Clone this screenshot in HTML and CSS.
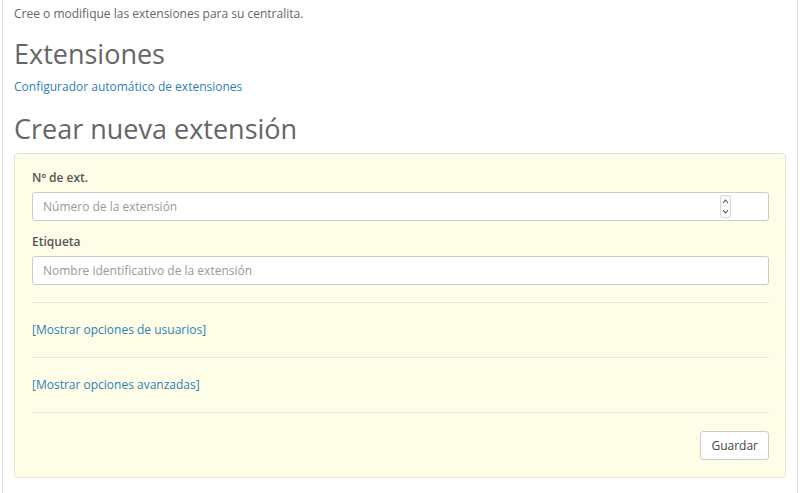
FILE: index.html
```html
<!DOCTYPE html>
<html lang="es">
<head>
<meta charset="utf-8">
<title>Extensiones</title>
<link rel="stylesheet" href="styles.css">
</head>
<body>
<div class="page">
  <p class="intro">Cree o modifique las extensiones para su centralita.</p>
  <h1 class="title">Extensiones</h1>
  <a class="link" href="#">Configurador automático de extensiones</a>
  <h1 class="title title-second">Crear nueva extensión</h1>
  <form class="card">
    <label class="label">Nº de ext.</label>
    <div class="field-wrap">
      <input class="field" type="text" placeholder="Número de la extensión">
      <svg class="spinner" width="11" height="23" viewBox="0 0 11 23" aria-hidden="true">
        <rect x="0.5" y="0.5" width="10" height="22" rx="1.5" fill="#fafafa" stroke="#d8d8d8"/>
        <path d="M3 8 L5.5 5 L8 8" fill="none" stroke="#555" stroke-width="1.1"/>
        <path d="M3 15 L5.5 18 L8 15" fill="none" stroke="#555" stroke-width="1.1"/>
      </svg>
    </div>
    <label class="label label-next">Etiqueta</label>
    <input class="field" type="text" placeholder="Nombre identificativo de la extensión">
    <hr class="rule rule-first">
    <div class="toggle"><a class="link" href="#">[Mostrar opciones de usuarios]</a></div>
    <hr class="rule">
    <div class="toggle"><a class="link" href="#">[Mostrar opciones avanzadas]</a></div>
    <hr class="rule">
    <div class="actions"><button type="button" class="btn">Guardar</button></div>
  </form>
</div>
</body>
</html>
```
FILE: styles.css
```css
html, body {
  margin: 0;
  padding: 0;
  background: #fff;
}
body {
  font-family: "Open Sans", "Noto Sans", sans-serif;
  font-size: 12px;
  color: #555;
}
.page {
  box-sizing: border-box;
  margin-left: 2px;
  width: 796px;
  padding: 4px 11px 0;
  border-left: 1px solid #dedede;
  border-right: 1px solid #dedede;
  height: 100vh;
}
.intro {
  margin: 0;
  line-height: 20px;
  color: #666;
}
.title {
  margin: 12px 0 5px;
  font-size: 27px;
  font-weight: 400;
  line-height: 36px;
  color: #666;
}
.title-second {
  margin: 14px 0 6px;
}
.link {
  display: inline-block;
  line-height: 20px;
  color: #2f7fb5;
  text-decoration: none;
}
.card {
  display: flex;
  flex-direction: column;
  background: #fdfde8;
  border: 1px solid #e6e6d4;
  border-radius: 3px;
  padding: 15px 16px 17px 17px;
}
.label {
  display: block;
  font-weight: 600;
  line-height: 18px;
  color: #555;
  margin-bottom: 5px;
}
.label-next {
  margin-top: 12px;
}
.field-wrap {
  position: relative;
}
.field {
  display: block;
  box-sizing: border-box;
  width: 100%;
  height: 29px;
  margin: 0;
  padding: 0 10px;
  border: 1px solid #ccc;
  border-radius: 3px;
  background: #fff;
  font-family: inherit;
  font-size: 12px;
  color: #555;
}
.field::placeholder {
  color: #999;
}
.spinner {
  position: absolute;
  top: 3px;
  right: 38px;
  display: block;
}
.rule {
  margin: 0;
  border: 0;
  border-top: 1px solid #e8e8d8;
  height: 0;
}
.rule-first {
  margin-top: 17px;
}
.toggle {
  height: 54px;
  display: flex;
  align-items: center;
}
.toggle .link {
  line-height: 18px;
}
.actions {
  display: flex;
  justify-content: flex-end;
  margin-top: 18px;
}
.btn {
  height: 29px;
  padding: 0 10px;
  border: 1px solid #ccc;
  border-radius: 3px;
  background: #fff;
  font-family: inherit;
  font-size: 12px;
  color: #444;
}
```
